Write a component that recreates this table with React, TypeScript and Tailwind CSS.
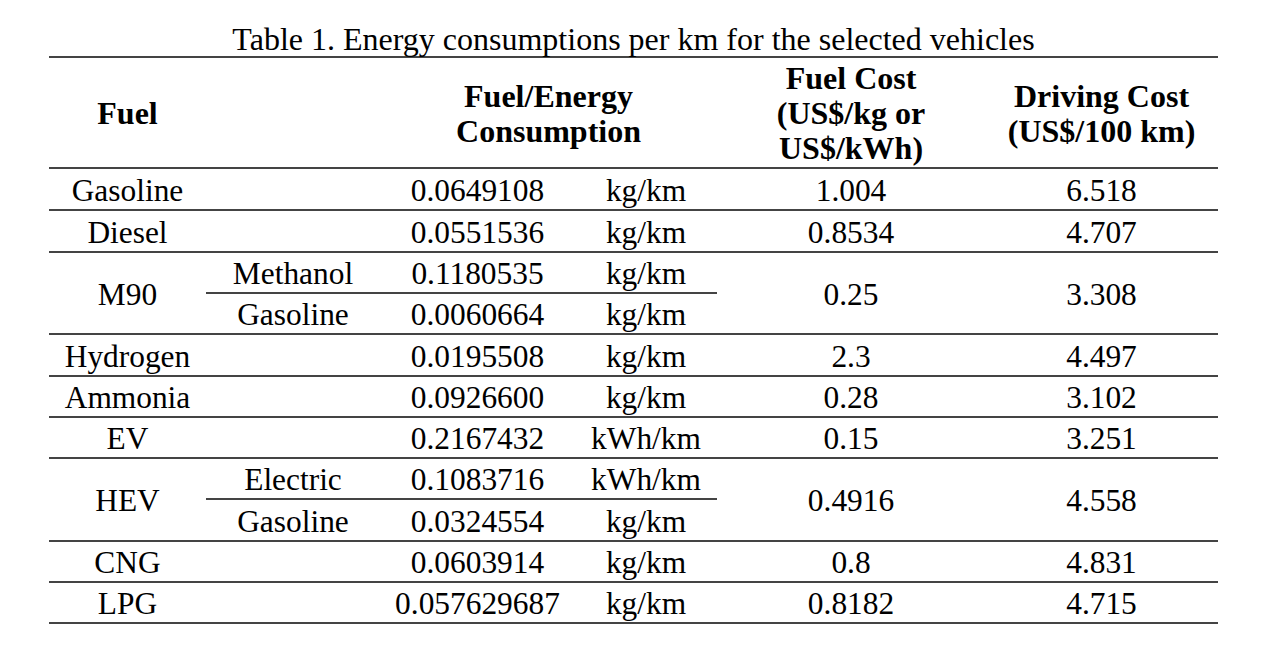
import React from "react";

type Row =
  | { kind: "single"; fuel: string; num: string; unit: string; cost: string; drive: string; h: number }
  | {
      kind: "double";
      fuel: string;
      a: { sub: string; num: string; unit: string };
      b: { sub: string; num: string; unit: string };
      cost: string;
      drive: string;
      h1: number;
      h2: number;
    };

const rows: Row[] = [
  { kind: "single", fuel: "Gasoline", num: "0.0649108", unit: "kg/km", cost: "1.004", drive: "6.518", h: 42 },
  { kind: "single", fuel: "Diesel", num: "0.0551536", unit: "kg/km", cost: "0.8534", drive: "4.707", h: 42 },
  {
    kind: "double",
    fuel: "M90",
    a: { sub: "Methanol", num: "0.1180535", unit: "kg/km" },
    b: { sub: "Gasoline", num: "0.0060664", unit: "kg/km" },
    cost: "0.25",
    drive: "3.308",
    h1: 41,
    h2: 41,
  },
  { kind: "single", fuel: "Hydrogen", num: "0.0195508", unit: "kg/km", cost: "2.3", drive: "4.497", h: 42 },
  { kind: "single", fuel: "Ammonia", num: "0.0926600", unit: "kg/km", cost: "0.28", drive: "3.102", h: 41 },
  { kind: "single", fuel: "EV", num: "0.2167432", unit: "kWh/km", cost: "0.15", drive: "3.251", h: 41 },
  {
    kind: "double",
    fuel: "HEV",
    a: { sub: "Electric", num: "0.1083716", unit: "kWh/km" },
    b: { sub: "Gasoline", num: "0.0324554", unit: "kg/km" },
    cost: "0.4916",
    drive: "4.558",
    h1: 41,
    h2: 42,
  },
  { kind: "single", fuel: "CNG", num: "0.0603914", unit: "kg/km", cost: "0.8", drive: "4.831", h: 41 },
  { kind: "single", fuel: "LPG", num: "0.057629687", unit: "kg/km", cost: "0.8182", drive: "4.715", h: 41 },
];

const bb = "border-b-2 border-[#444]";
const td = "px-0 pb-0 pt-[3px] text-center align-middle whitespace-nowrap";
const th = "px-0 pb-0 pt-[2px] text-center align-middle whitespace-nowrap";

export default function App() {
  return (
    <div
      className="w-[1270px] h-[659px] bg-white text-black"
      style={{ fontFamily: '"Liberation Serif", "Times New Roman", serif' }}
    >
      <div className="pt-[22px] h-[56px] text-center text-[32px] leading-[35px] ml-[49px] w-[1169px] whitespace-nowrap">
        Table 1. Energy consumptions per km for the selected vehicles
      </div>
      <table className="ml-[49px] w-[1169px] table-fixed border-collapse text-[31.4px] leading-[normal]">
        <colgroup>
          <col className="w-[157px]" />
          <col className="w-[174px]" />
          <col className="w-[195px]" />
          <col className="w-[142px]" />
          <col className="w-[268px]" />
          <col className="w-[233px]" />
        </colgroup>
        <thead>
          <tr className="h-[111px] border-t-2 border-[#444] font-bold text-[32px] leading-[35px]">
            <th className={`${th} ${bb}`}>Fuel</th>
            <th className={`${th} ${bb}`}></th>
            <th className={`${th} ${bb}`} colSpan={2}>
              Fuel/Energy
              <br />
              Consumption
            </th>
            <th className={`${th} ${bb}`}>
              Fuel Cost
              <br />
              (US$/kg or
              <br />
              US$/kWh)
            </th>
            <th className={`${th} ${bb}`}>
              Driving Cost
              <br />
              (US$/100 km)
            </th>
          </tr>
        </thead>
        <tbody>
          {rows.map((r, i) =>
            r.kind === "single" ? (
              <tr key={i} style={{ height: r.h }}>
                <td className={`${td} ${bb}`}>{r.fuel}</td>
                <td className={`${td} ${bb}`}></td>
                <td className={`${td} ${bb}`}>{r.num}</td>
                <td className={`${td} ${bb}`}>{r.unit}</td>
                <td className={`${td} ${bb}`}>{r.cost}</td>
                <td className={`${td} ${bb}`}>{r.drive}</td>
              </tr>
            ) : (
              <React.Fragment key={i}>
                <tr style={{ height: r.h1 }}>
                  <td className={`${td} ${bb}`} rowSpan={2}>
                    {r.fuel}
                  </td>
                  <td className={`${td} ${bb}`}>{r.a.sub}</td>
                  <td className={`${td} ${bb}`}>{r.a.num}</td>
                  <td className={`${td} ${bb}`}>{r.a.unit}</td>
                  <td className={`${td} ${bb}`} rowSpan={2}>
                    {r.cost}
                  </td>
                  <td className={`${td} ${bb}`} rowSpan={2}>
                    {r.drive}
                  </td>
                </tr>
                <tr style={{ height: r.h2 }}>
                  <td className={`${td} ${bb}`}>{r.b.sub}</td>
                  <td className={`${td} ${bb}`}>{r.b.num}</td>
                  <td className={`${td} ${bb}`}>{r.b.unit}</td>
                </tr>
              </React.Fragment>
            )
          )}
        </tbody>
      </table>
    </div>
  );
}
